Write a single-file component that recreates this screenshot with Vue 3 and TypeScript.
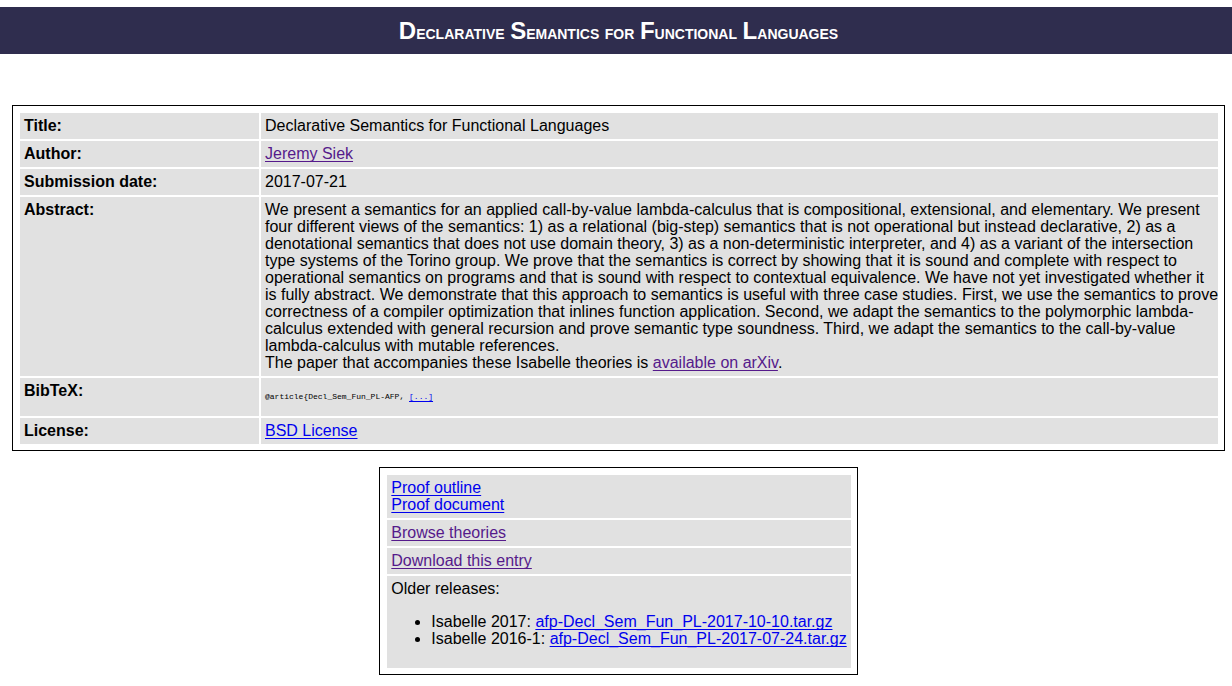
<script setup lang="ts">
const bibtex = '@article{Decl_Sem_Fun_PL-AFP, '
const abstractLines = [
  'We present a semantics for an applied call-by-value lambda-calculus that is compositional, extensional, and elementary. We present',
  'four different views of the semantics: 1) as a relational (big-step) semantics that is not operational but instead declarative, 2) as a',
  'denotational semantics that does not use domain theory, 3) as a non-deterministic interpreter, and 4) as a variant of the intersection',
  'type systems of the Torino group. We prove that the semantics is correct by showing that it is sound and complete with respect to',
  'operational semantics on programs and that is sound with respect to contextual equivalence. We have not yet investigated whether it',
  'is fully abstract. We demonstrate that this approach to semantics is useful with three case studies. First, we use the semantics to prove',
  'correctness of a compiler optimization that inlines function application. Second, we adapt the semantics to the polymorphic lambda-',
  'calculus extended with general recursion and prove semantic type soundness. Third, we adapt the semantics to the call-by-value',
  'lambda-calculus with mutable references.',
]
const releases = [
  { name: 'Isabelle 2017', file: 'afp-Decl_Sem_Fun_PL-2017-10-10.tar.gz' },
  { name: 'Isabelle 2016-1', file: 'afp-Decl_Sem_Fun_PL-2017-07-24.tar.gz' },
]
</script>

<template>
  <main class="page">
    <h1 class="banner">
      <span class="cap">D</span>eclarative <span class="cap">S</span>emantics for
      <span class="cap">F</span>unctional <span class="cap">L</span>anguages
    </h1>
    <div class="content">
      <table class="entry">
        <tbody>
          <tr><th scope="row">Title:</th><td>Declarative Semantics for Functional Languages</td></tr>
          <tr><th scope="row">Author:</th><td><a class="visited" href="#author">Jeremy Siek</a></td></tr>
          <tr><th scope="row">Submission date:</th><td>2017-07-21</td></tr>
          <tr>
            <th scope="row">Abstract:</th>
            <td class="abstract">
              <template v-for="line in abstractLines" :key="line">{{ line }}<br></template>
              The paper that accompanies these Isabelle theories is <a class="visited" href="#arxiv">available on arXiv</a>.
            </td>
          </tr>
          <tr>
            <th scope="row">BibTeX:</th>
            <td><div class="bibtex">{{ bibtex }}<a href="#bibtex">[...]</a></div></td>
          </tr>
          <tr><th scope="row">License:</th><td><a href="#license">BSD License</a></td></tr>
        </tbody>
      </table>
      <table class="links">
        <tbody>
          <tr><td><a href="#outline">Proof outline</a><br><a href="#document">Proof document</a></td></tr>
          <tr><td><a class="visited" href="#theories">Browse theories</a></td></tr>
          <tr><td><a class="visited" href="#download">Download this entry</a></td></tr>
          <tr>
            <td>
              Older releases:
              <ul>
                <li v-for="r in releases" :key="r.file">{{ r.name }}: <a :href="'#' + r.file">{{ r.file }}</a></li>
              </ul>
            </td>
          </tr>
        </tbody>
      </table>
    </div>
  </main>
</template>

<style>
body {
  margin: 0;
  background: #ffffff;
}
</style>

<style scoped>
.page {
  padding-top: 7px;
  font-family: "Liberation Sans", Arial, sans-serif;
  font-size: 16px;
  line-height: 17px;
  color: #000000;
}
.banner {
  margin: 0 0 51px;
  padding: 12px 0 8px 5px;
  background: #2f2d4e;
  color: #ffffff;
  font-size: 20px;
  line-height: 27px;
  font-weight: bold;
  text-align: center;
  font-variant: small-caps;
}
.cap {
  font-size: 24px;
  line-height: 24px;
}
.content {
  padding: 0 7px 0 12px;
}
table {
  border: 1px solid #000000;
  border-spacing: 2px;
  padding: 5px 4px 4px 5px;
}
.entry {
  width: 100%;
  table-layout: fixed;
  margin-bottom: 16px;
}
.links {
  margin: 0 auto;
}
th,
td {
  padding: 4px 4px 5px;
  background: #e1e1e1;
  text-align: left;
  vertical-align: top;
}
th {
  width: 239px;
  box-sizing: border-box;
  font-weight: bold;
}
.abstract {
  padding-right: 0;
  white-space: nowrap;
}
a {
  color: #0000ee;
  text-decoration-skip-ink: none;
  text-underline-offset: 2px;
}
.visited {
  color: #551a8b;
}
.bibtex {
  padding: 6px 0;
  font-family: "Liberation Mono", "Courier New", monospace;
  font-size: 8px;
}
ul {
  margin: 16px 0;
  padding-left: 40px;
}
</style>
